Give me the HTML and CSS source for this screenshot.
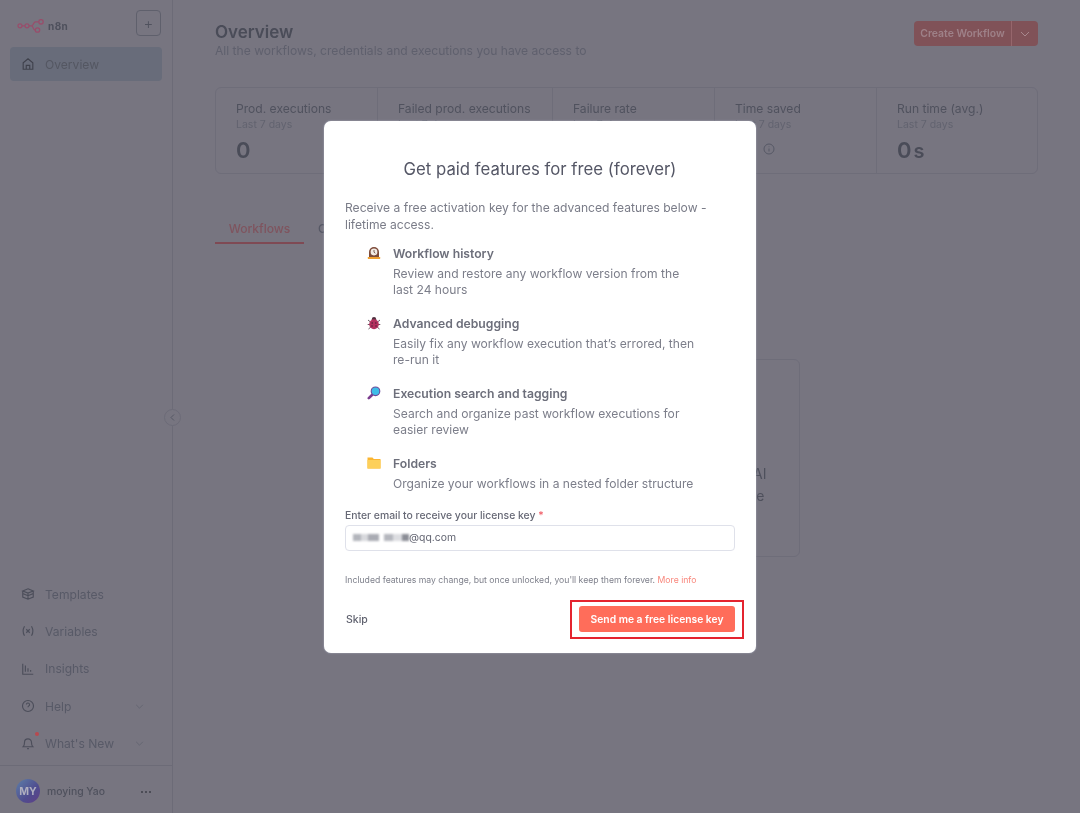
FILE: index.html
```html
<!DOCTYPE html>
<html lang="en">
<head>
<meta charset="utf-8">
<title>n8n Overview</title>
<link rel="stylesheet" href="styles.css">
</head>
<body>
<div class="app">
  <aside class="sidebar">
    <div class="side-top">
      <div class="logo">
        <svg class="logo-mark" width="27" height="14" viewBox="0 0 27 14" fill="none" stroke="#984e6b" stroke-width="1.300"><circle cx="3" cy="6.800" r="2"/><circle cx="10" cy="6.800" r="2"/><circle cx="20.500" cy="11" r="2.200"/><circle cx="24" cy="2.800" r="2.200"/><path d="M5 6.800h3M12 6.800h2.500c2.500 0 1.500-4 4-4h3.300M14.500 6.800c2 0 1 4.200 3.800 4.200"/></svg>
        <span class="logo-text">n8n</span>
      </div>
      <div class="plus">+</div>
    </div>
    <div class="nav-item active">
      <svg class="nav-icon" viewBox="0 0 16 16" fill="none" stroke="#3f414c" stroke-width="1.300"><path d="M2.500 14V6.500L8 2l5.500 4.500V14zM6 14V9.500h4V14"/></svg>
      <span>Overview</span>
    </div>
    <div class="side-spacer"></div>
    <div class="nav-item">
      <svg class="nav-icon" viewBox="0 0 16 16" fill="none" stroke="#4c4e5a" stroke-width="1.300"><path d="M8 2l6 2.500L8 7 2 4.500zM2 4.500v3L8 10l6-2.500v-3M2 7.500v4L8 14l6-2.500v-4M8 7v7"/></svg>
      <span>Templates</span>
    </div>
    <div class="nav-item">
      <svg class="nav-icon" viewBox="0 0 16 16" fill="none" stroke="#4c4e5a" stroke-width="1.300"><path d="M4 2.500C2 6 2 10 4 13.500M12 2.500c2 3.500 2 7.500 0 11M6 6l4 4M10 6l-4 4"/></svg>
      <span>Variables</span>
    </div>
    <div class="nav-item">
      <svg class="nav-icon" viewBox="0 0 16 16" fill="none" stroke="#4c4e5a" stroke-width="1.300"><path d="M2 2v12h12M5 4v7M8 7v4M11 9v2"/></svg>
      <span>Insights</span>
    </div>
    <div class="nav-item">
      <svg class="nav-icon" viewBox="0 0 16 16" fill="none" stroke="#4c4e5a" stroke-width="1.300"><circle cx="8" cy="8" r="6.300"/><path d="M6.200 6.300a1.800 1.800 0 1 1 2.600 1.700c-.6.300-.8.700-.8 1.300M8 11.300v.2"/></svg>
      <span>Help</span>
      <svg class="nav-chev" viewBox="0 0 10 6" fill="none" stroke="#62636f" stroke-width="1"><path d="M1 1l4 4 4-4"/></svg>
    </div>
    <div class="nav-item">
      <span class="bell">
        <svg class="nav-icon" viewBox="0 0 16 16" fill="none" stroke="#4c4e5a" stroke-width="1.300"><path d="M2.500 12.300h11c-1.500-1.500-1.500-3-1.500-5a4 4 0 0 0-8 0c0 2 0 3.500-1.500 5zM7 14.500h2"/></svg>
        <i class="dot"></i>
      </span>
      <span>What's New</span>
      <svg class="nav-chev" viewBox="0 0 10 6" fill="none" stroke="#62636f" stroke-width="1"><path d="M1 1l4 4 4-4"/></svg>
    </div>
    <div class="user">
      <div class="avatar">MY</div>
      <span class="user-name">moying Yao</span>
      <span class="user-more">···</span>
    </div>
  </aside>
  <main class="main">
    <header class="head">
      <div>
        <h1 class="title">Overview</h1>
        <p class="subtitle">All the workflows, credentials and executions you have access to</p>
      </div>
      <div class="create">
        <span class="create-label">Create Workflow</span>
        <span class="create-arrow"><svg width="10" height="6" viewBox="0 0 10 6" fill="none" stroke="#a8888e" stroke-width="1"><path d="M1 1l4 4 4-4"/></svg></span>
      </div>
    </header>
    <section class="stats">
      <div class="stat"><div class="stat-label">Prod. executions</div><div class="stat-sub">Last 7 days</div><div class="stat-val">0</div></div>
      <div class="stat"><div class="stat-label">Failed prod. executions</div><div class="stat-sub">Last 7 days</div><div class="stat-val">0</div></div>
      <div class="stat"><div class="stat-label">Failure rate</div><div class="stat-sub">Last 7 days</div><div class="stat-val">0%</div></div>
      <div class="stat"><div class="stat-label">Time saved</div><div class="stat-sub">Last 7 days</div>
        <div class="stat-info"><svg width="12" height="12" viewBox="0 0 12 12" fill="none" stroke="#565865" stroke-width="1"><circle cx="6" cy="6" r="5"/><path d="M6 5.500v3M6 3.500v.6"/></svg></div>
      </div>
      <div class="stat last"><div class="stat-label">Run time (avg.)</div><div class="stat-sub">Last 7 days</div><div class="stat-val">0<small>s</small></div></div>
    </section>
    <nav class="tabs">
      <span class="tab-on">Workflows</span>
      <span class="tab-off">Credentials</span>
    </nav>
    <section class="empty">
      <div class="empty-card">
        <p>Test a simple AI</p>
        <p class="line-two">Agent example</p>
      </div>
    </section>
  </main>
</div>
<div class="collapse"><svg width="5" height="7" viewBox="0 0 5 7" fill="none" stroke="#565865" stroke-width="1"><path d="M4 .5l-3 3 3 3"/></svg></div>

<div class="backdrop">
  <div class="modal">
    <h2 class="modal-title">Get paid features for free (forever)</h2>
    <p class="intro">Receive a free activation key for the advanced features below - lifetime access.</p>
    <ul class="features">
      <li class="feature">
        <svg class="emoji" viewBox="0 0 14 14"><path d="M2 11V6a5 5 0 0 1 10 0v5z" fill="#7d4b3a"/><circle cx="7" cy="6" r="3.400" fill="#f3ebe4"/><path d="M7 4v2.200l1.300 1" stroke="#5b3a30" stroke-width=".8" fill="none"/><rect x=".8" y="11" width="12.400" height="2" rx=".4" fill="#f0a030"/></svg>
        <div><h3>Workflow history</h3><p>Review and restore any workflow version from the last 24 hours</p></div>
      </li>
      <li class="feature">
        <svg class="emoji" viewBox="0 0 14 14"><path d="M1 4l2.500 2M13 4l-2.500 2M.7 8.500h2.500M13.300 8.500h-2.500M1.500 13l2.300-2M12.500 13l-2.300-2" stroke="#5a4450" stroke-width=".9"/><circle cx="7" cy="3.200" r="2.200" fill="#51303f"/><ellipse cx="7" cy="8.300" rx="4.800" ry="5" fill="#b4305e"/><circle cx="5.200" cy="7" r=".8" fill="#51203a"/><circle cx="8.800" cy="7" r=".8" fill="#51203a"/><circle cx="5" cy="10" r=".8" fill="#51203a"/><circle cx="9" cy="10" r=".8" fill="#51203a"/></svg>
        <div><h3>Advanced debugging</h3><p>Easily fix any workflow execution that’s errored, then re-run it</p></div>
      </li>
      <li class="feature">
        <svg class="emoji" viewBox="0 0 14 14"><path d="M5 9L1.800 12.200" stroke="#7b3c8e" stroke-width="2.600" stroke-linecap="round"/><circle cx="8.500" cy="5.300" r="4.300" fill="#3dbde8" stroke="#6a4a9c" stroke-width="1.100"/></svg>
        <div><h3>Execution search and tagging</h3><p>Search and organize past workflow executions for easier review</p></div>
      </li>
      <li class="feature">
        <svg class="emoji" viewBox="0 0 14 14"><path d="M.5 1.500h5l1.300 1.500h6.700v9.500H.5z" fill="#fbb531"/><rect x=".5" y="4" width="13" height="8.500" fill="#fdd05a"/></svg>
        <div><h3>Folders</h3><p>Organize your workflows in a nested folder structure</p></div>
      </li>
    </ul>
    <label class="field-label">Enter email to receive your license key <span class="req">*</span></label>
    <div class="input">
      <span class="masked"><i></i><i></i><i></i><i></i><i></i><i></i><i></i></span><span>@qq.com</span>
    </div>
    <p class="fine">Included features may change, but once unlocked, you'll keep them forever. <a class="more">More info</a></p>
    <div class="actions">
      <span class="skip">Skip</span>
      <div class="highlight"><button class="send">Send me a free license key</button></div>
    </div>
  </div>
</div>
</body>
</html>
```
FILE: styles.css
```css
* { box-sizing: border-box; }
html, body { margin: 0; height: 100%; overflow: hidden; }
body { font-family: Inter, "Liberation Sans", sans-serif; background: #777580; color: #4d4f5b; }
p, h1, h2, h3, ul { margin: 0; padding: 0; }
li { list-style: none; }

.app { display: flex; height: 813px; filter: blur(.4px); }
.sidebar { width: 173px; flex: none; border-right: 1px solid #6c6b77; display: flex; flex-direction: column; }
.side-top { height: 47px; display: flex; align-items: flex-start; justify-content: space-between; padding: 10px 11px 0 17px; }
.logo { display: flex; align-items: center; gap: 4px; height: 14px; margin-top: 9px; }
.logo-mark { display: block; }
.logo-text { font-size: 10px; font-weight: 700; letter-spacing: .4px; color: #4e505c; }
.plus { width: 25px; height: 26px; border: 1px solid #5f606c; border-radius: 4px; display: flex; align-items: center; justify-content: center; font-size: 15px; font-weight: 300; color: #50525e; }
.nav-item { display: flex; align-items: center; height: 37.300px; padding: 0 28px 0 21px; gap: 10px; font-size: 12.100px; font-weight: 400; color: #585a67; }
.nav-item span { white-space: nowrap; }
.nav-item.active { height: 34px; margin: 0 10px; padding: 0 0 0 11px; background: #686c7a; border-radius: 4px; color: #545762; }
.nav-icon { width: 14px; height: 14px; flex: none; display: block; }
.nav-chev { width: 9px; height: 5px; margin-left: auto; flex: none; }
.side-spacer { flex: 1; }
.bell { position: relative; display: block; width: 14px; height: 14px; flex: none; }
.dot { position: absolute; right: -4px; top: -4px; width: 4px; height: 4px; border-radius: 50%; background: #b8494f; }
.user { height: 48px; margin-top: 3px; padding: 3px 20px 0 16px; border-top: 1px solid #6c6b77; display: flex; align-items: center; }
.avatar { width: 24px; height: 24px; border-radius: 50%; background: linear-gradient(135deg, #5d7fa8 0%, #4f4c8f 60%, #603f86 100%); color: #b0afbf; font-size: 10.500px; font-weight: 700; display: flex; align-items: center; justify-content: center; }
.user-name { margin-left: 7px; font-size: 10.400px; font-weight: 500; color: #4f515d; }
.user-more { margin-left: auto; font-size: 12px; font-weight: 700; color: #45464f; }

.main { flex: 1; padding: 22px 42px 0 42px; min-width: 0; }
.head { display: flex; justify-content: space-between; align-items: flex-start; height: 65px; }
.title { font-size: 17px; font-weight: 600; line-height: 20px; color: #4a4c58; }
.subtitle { font-size: 12.100px; line-height: 18px; color: #5f606d; }
.create { display: flex; height: 25px; border-radius: 4px; overflow: hidden; background: #805258; font-size: 10.400px; font-weight: 600; color: #9e8188; margin-top: -1px; }
.create-label { width: 98px; justify-content: center; display: flex; align-items: center; border-right: 1px solid #96666c; }
.create-arrow { width: 26px; display: flex; align-items: center; justify-content: center; }

.stats { display: grid; grid-template-columns: 162px 175px 162px 162px 1fr; height: 87px; border: 1px solid #6e6d79; border-radius: 6px; }
.stat { padding: 13px 0 0 20px; border-right: 1px solid #6e6d79; white-space: nowrap; overflow: hidden; }
.stat.last { border-right: 0; }
.stat-label { font-size: 12.100px; line-height: 15px; color: #50525e; }
.stat-sub { font-size: 10.500px; line-height: 13px; margin-top: 2px; color: #62636f; }
.stat-val { font-size: 22px; font-weight: 600; line-height: 24px; margin-top: 7px; color: #4a4c58; }
.stat-val small { font-size: 20px; margin-left: 2px; }
.stat-info { margin-top: 12px; padding-left: 28px; line-height: 0; }

.tabs { display: flex; margin-top: 42px; height: 28px; font-size: 12.100px; font-weight: 500; }
.tab-on { width: 89px; text-align: center; color: #7f545e; border-bottom: 2px solid #7f4a54; height: 28px; line-height: 26px; }
.tab-off { margin-left: 14px; color: #565865; line-height: 26px; }

.empty { display: flex; justify-content: center; margin-top: 115px; }
.empty-card { width: 346px; height: 198px; border: 1px solid #6e6d79; border-radius: 6px; padding: 103px 32px 0 0; text-align: right; font-size: 14px; line-height: 22px; color: #4e505c; }
.line-two { margin-right: 2px; }
.collapse { position: fixed; left: 164px; top: 409px; width: 17px; height: 17px; border-radius: 50%; border: 1px solid #6c6b77; background: #777580; display: flex; align-items: center; justify-content: center; }

.backdrop { position: fixed; inset: 0; display: flex; justify-content: center; align-items: flex-start; padding: 121px 0 0; }
.modal { width: 432px; height: 532px; background: #fff; border-radius: 7px; padding: 37px 21px 0; color: #737580; box-shadow: 0 0 2px rgba(200,205,225,.7); filter: blur(.3px); }
.modal-title { text-align: center; font-size: 16.750px; font-weight: 400; line-height: 22px; color: #555766; }
.intro { font-size: 12.100px; line-height: 17px; margin-top: 19px; color: #7a7c88; }
.features { margin-top: 12px; padding-left: 22px; width: 370px; }
.feature { display: flex; gap: 12px; margin-bottom: 17px; }
.feature:last-child { margin-bottom: 0; }
.emoji { width: 14px; height: 14px; flex: none; display: block; margin-top: 1px; }
.feature div { width: 305px; }
.feature h3 { font-size: 12.200px; font-weight: 600; line-height: 17px; color: #6d6f7b; }
.feature p { font-size: 12.100px; line-height: 16px; margin-top: 4px; color: #7c7e8a; }
.field-label { display: block; margin-top: 16.500px; font-size: 10.400px; font-weight: 500; line-height: 14px; color: #676976; }
.req { color: #f0606a; }
.input { height: 26px; margin-top: 2px; border: 1px solid #dfe1ea; border-radius: 4px; display: flex; align-items: center; padding-left: 7px; font-size: 10.400px; color: #636572; }
.masked { display: flex; align-items: center; height: 8px; filter: blur(.8px); }
.masked i { display: block; height: 7px; background: #b3b5bc; width: 8px; }
.masked i:nth-child(2) { background: #d8d9dd; width: 7px; }
.masked i:nth-child(3) { background: #a9abb3; width: 11px; }
.masked i:nth-child(4) { background: #fff; width: 5px; }
.masked i:nth-child(5) { background: #b5b7be; width: 9px; }
.masked i:nth-child(6) { background: #dcdde1; width: 9px; }
.masked i:nth-child(7) { background: #8b8d96; width: 7px; }
.fine { margin-top: 23px; font-size: 8.670px; line-height: 12px; color: #7f818c; white-space: nowrap; }
.more { color: #f9877c; }
.actions { display: flex; justify-content: space-between; align-items: center; margin-top: 14px; }
.skip { font-size: 10.500px; font-weight: 500; color: #60626f; margin-left: 1px; }
.highlight { border: 2px solid #e4242f; padding: 4px 7px 5px; margin-right: -9px; display: flex; }
.send { width: 156px; height: 26px; border: 0; border-radius: 3px; background: #ff6d5a; color: #fff; font-family: inherit; font-size: 10.300px; font-weight: 600; padding: 0; }
```
